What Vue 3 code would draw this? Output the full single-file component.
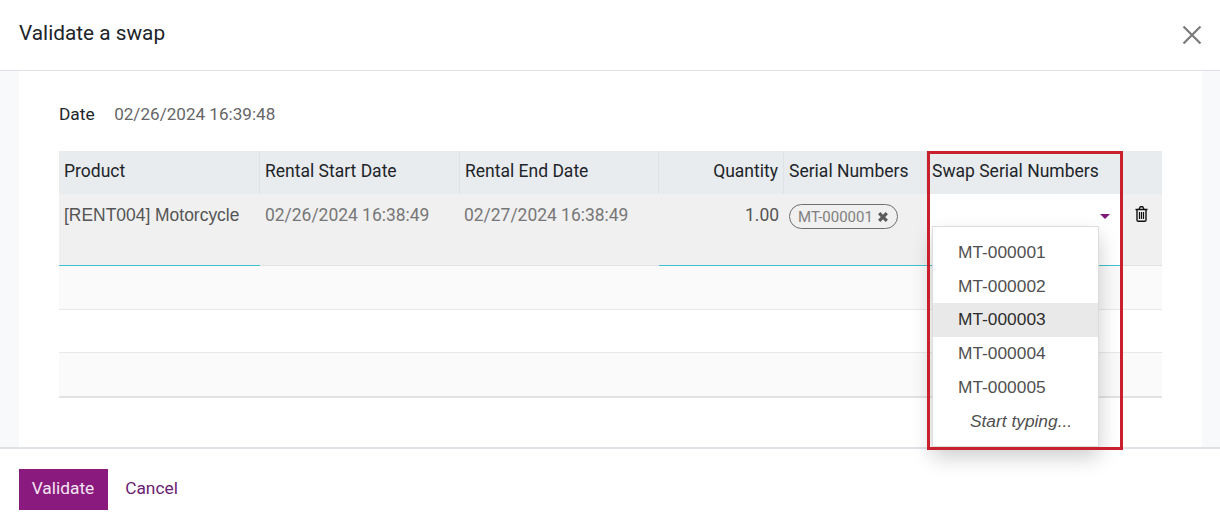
<script setup>
const options = ['MT-000001', 'MT-000002', 'MT-000003', 'MT-000004', 'MT-000005']
const blankRows = ['odd', 'even', 'odd']
</script>

<template>
  <div class="modal">
    <header class="head">
      <h4 class="title">Validate a swap</h4>
      <svg class="close" width="20" height="20" viewBox="0 0 20 20" aria-label="Close">
        <path d="M1.5 1.5 18.5 18.5M18.5 1.5 1.5 18.5" stroke="#7a7a7a" stroke-width="2.2" fill="none" />
      </svg>
    </header>
    <main class="body">
      <section class="sheet">
        <div class="field">
          <span class="label">Date</span>
          <span class="value">02/26/2024 16:39:48</span>
        </div>
        <table class="grid">
          <colgroup>
            <col class="c1" /><col class="c2" /><col class="c3" /><col class="c4" />
            <col class="c5" /><col class="c6" /><col class="c7" />
          </colgroup>
          <thead>
            <tr>
              <th>Product</th>
              <th>Rental Start Date</th>
              <th>Rental End Date</th>
              <th class="num">Quantity</th>
              <th>Serial Numbers</th>
              <th class="plain">Swap Serial Numbers</th>
              <th class="plain"></th>
            </tr>
          </thead>
          <tbody>
            <tr class="active">
              <td class="edit sans">[RENT004] Motorcycle</td>
              <td class="muted">02/26/2024 16:38:49</td>
              <td class="muted end">02/27/2024 16:38:49</td>
              <td class="edit num">1.00</td>
              <td class="edit">
                <span class="chip">MT-000001
                  <svg class="chip-x" width="12" height="12" viewBox="0 0 12 12">
                    <path d="M2.2 2.2 9.8 9.8M9.8 2.2 2.2 9.8" stroke="#5a5a5a" stroke-width="3.2" fill="none" />
                  </svg>
                </span>
              </td>
              <td class="edit swap">
                <span class="caret"></span>
                <ul class="menu">
                  <li v-for="o in options" :key="o" :class="{ hover: o === 'MT-000003' }">{{ o }}</li>
                  <li class="hint">Start typing...</li>
                </ul>
              </td>
              <td class="trash-cell">
                <svg class="trash" width="13" height="16" viewBox="0 0 13 16">
                  <path d="M.5 3.5h12M2 3.5v10.6c0 .8.5 1.2 1.2 1.2h6.6c.7 0 1.2-.4 1.2-1.2V3.5M4 3.5l.9-2.2c.1-.3.4-.6.8-.6h1.6c.4 0 .7.3.8.6L9 3.5" stroke="#111" stroke-width="1.4" fill="none" />
                  <path d="M4.5 6v7M6.5 6v7M8.5 6v7" stroke="#111" stroke-width="1.2" fill="none" />
                </svg>
              </td>
            </tr>
            <tr v-for="(r, i) in blankRows" :key="i" :class="['blank', r]">
              <td colspan="7"></td>
            </tr>
          </tbody>
        </table>
      </section>
    </main>
    <footer class="foot">
      <button class="primary">Validate</button>
      <button class="link">Cancel</button>
    </footer>
    <div class="highlight"></div>
  </div>
</template>

<style>
html, body { margin: 0; background: #fff; }
</style>

<style scoped>
.modal {
  position: relative;
  height: 526px;
  width: 1220px;
  display: flex;
  flex-direction: column;
  overflow: hidden;
  font-family: Roboto, "Liberation Sans", sans-serif;
  font-size: 17.33px;
  color: #212529;
  background: #fff;
}
.head {
  flex: 0 0 71px;
  box-sizing: border-box;
  display: flex;
  align-items: center;
  justify-content: space-between;
  padding: 0 18px 4px 19px;
  border-bottom: 1px solid #dee2e6;
}
.title {
  margin: 0;
  font-size: 20.8px;
  font-weight: 400;
}
.close { margin-top: 4px; }
.body {
  flex: 0 0 376px;
  background: #f8f9fa;
  padding: 0 18px 0 19px;
  display: flex;
}
.sheet {
  flex: 1;
  background: #fff;
  padding: 0 40px;
}
.field {
  display: flex;
  gap: 19.5px;
  padding-top: 32px;
  height: 48px;
  line-height: 22px;
}
.value { color: #666; font-size: 17.1px; }
.grid {
  width: 1103px;
  table-layout: fixed;
  border-collapse: separate;
  border-spacing: 0;
}
.c1 { width: 201px; }
.c2 { width: 200px; }
.c3 { width: 199px; }
.c4 { width: 125px; }
.c5 { width: 143px; }
.c6 { width: 195px; }
.c7 { width: 40px; }
th {
  height: 43px;
  box-sizing: border-box;
  padding: 0 5px 4px;
  background: #e9ecef;
  font-size: 17.5px;
  font-weight: 400;
  text-align: left;
  border-right: 1px solid #dfe2e6;
  white-space: nowrap;
}
th.plain { border-right: 0; }
.num { text-align: right; }
td {
  padding: 0;
  vertical-align: top;
}
.active td {
  height: 72px;
  box-sizing: border-box;
  padding: 11px 5px 0;
  font-size: 17.45px;
  line-height: 20px;
  background: #f0f0f0;
  box-shadow: inset 0 -1px 0 #e2e2e2;
  color: #555;
  white-space: nowrap;
}
.active td.edit { box-shadow: inset 0 -1px 0 #3fc1ce; }
.active td.muted { color: #777; }
.active td.end { padding-left: 4px; }
.active td.sans { font-family: "Liberation Sans", sans-serif; }
.active td.swap {
  position: relative;
  background: #fff;
}
.chip {
  display: inline-flex;
  align-items: center;
  gap: 4px;
  box-sizing: border-box;
  height: 25px;
  padding: 0 8px;
  border: 1px solid #6f6f6f;
  border-radius: 13px;
  font-size: 15px;
  color: #808080;
  margin-top: -1px;
}
.caret {
  position: absolute;
  left: 173px;
  top: 20px;
  border-style: solid;
  border-width: 5px 5px 0;
  border-color: #7c1a7c transparent transparent;
}
.menu {
  position: absolute;
  z-index: 3;
  left: 5px;
  top: 32px;
  width: 167px;
  height: 221px;
  box-sizing: border-box;
  margin: 0;
  padding: 9px 0 0;
  list-style: none;
  background: #fff;
  border: 1px solid #dcdcdc;
  box-shadow: 0 10px 20px rgba(0, 0, 0, .2);
  font-family: "Liberation Sans", sans-serif;
  font-size: 17.33px;
  line-height: 33.7px;
  color: #505050;
}
.menu li {
  height: 33.7px;
  padding-left: 25px;
}
.menu li.hover { background: #e9e9e9; color: #2d2d2d; }
.menu li.hint {
  font-style: italic;
  padding-left: 37px;
  line-height: 35px;
}
.active td.trash-cell { padding: 12px 0 0 13px; }
.trash { display: block; }
.blank td {
  box-sizing: border-box;
  border-bottom: 1px solid #e8e8e8;
}
.blank.odd td { height: 44px; background: #fafafa; }
.blank.even td { height: 43px; background: #fff; }
.blank:last-child td { height: 45px; border-bottom: 2px solid #e2e2e2; }
.foot {
  flex: 1;
  box-sizing: border-box;
  border-top: 2px solid #dee2e6;
  padding: 20px 19px 0;
  display: flex;
  align-items: flex-start;
}
button {
  font: inherit;
  border: 0;
  background: none;
  height: 41px;
  padding: 0 0 3px;
}
.primary {
  width: 89px;
  padding-right: 1px;
  background: #8a1a7e;
  color: #f3e6f2;
}
.link {
  width: 88px;
  padding-right: 1px;
  color: #6a2170;
}
.highlight {
  position: absolute;
  z-index: 4;
  left: 927px;
  top: 151px;
  width: 196px;
  height: 299px;
  box-sizing: border-box;
  border: 3px solid #c8202c;
  pointer-events: none;
}
</style>
